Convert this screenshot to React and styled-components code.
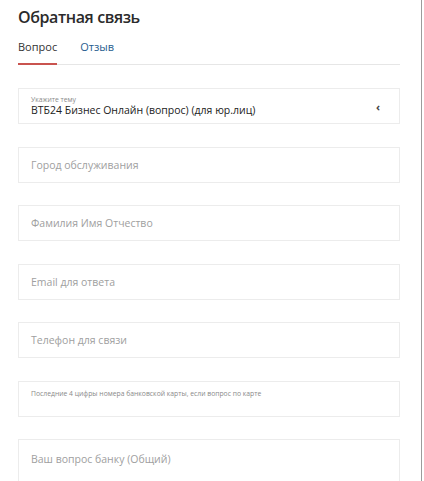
import React from "react";
import styled, { createGlobalStyle } from "styled-components";

const Global = createGlobalStyle`
  html, body { margin: 0; padding: 0; background: #fff; }
  body { font-family: "Open Sans", "Noto Sans", sans-serif; overflow: hidden; }
  * { box-sizing: border-box; }
`;

const Page = styled.div`
  width: 422px;
  height: 481px;
  border-right: 1px solid #9c9c9c;
  padding: 6px 0 0 18px;
  overflow: hidden;
`;

const Content = styled.div`
  width: 382px;
  display: flex;
  flex-direction: column;
`;

const Title = styled.h1`
  margin: 0;
  font-size: 16px;
  font-weight: 600;
  letter-spacing: -0.4px;
  color: #2b2b2b;
  line-height: 22px;
`;

const Tabs = styled.div`
  display: flex;
  gap: 23px;
  margin-top: 11px;
  border-bottom: 1px solid #e6e6e6;
`;

const Tab = styled.div`
  font-size: 11px;
  line-height: 15px;
  padding-bottom: 9px;
  color: ${(p) => (p.$active ? "#333" : "#1f5d8e")};
  border-bottom: 2px solid ${(p) => (p.$active ? "#c9534f" : "transparent")};
  margin-bottom: -1px;
`;

const Form = styled.div`
  display: flex;
  flex-direction: column;
  gap: 22.5px;
  margin-top: 23px;
`;

const Field = styled.div`
  height: ${(p) => p.$h || 36}px;
  border: 1px solid #ececec;
  background: #fff;
  padding: 0 12px;
  display: flex;
  flex-direction: column;
  justify-content: ${(p) => (p.$top ? "flex-start" : "center")};
  padding-top: ${(p) => (p.$top ? p.$top : 0)}px;
  position: relative;
  flex-shrink: 0;
`;

const Placeholder = styled.div`
  font-size: 10.5px;
  color: #a0a0a0;
  line-height: 14px;
`;

const Tiny = styled.div`
  font-size: 6.8px;
  line-height: 8px;
  color: #8a8a8a;
`;

const Value = styled.div`
  font-size: 10.5px;
  line-height: 13px;
  color: #222;
`;

const Chevron = styled.span`
  position: absolute;
  right: 19px;
  top: 10px;
  font-size: 11px;
  color: #444;
  font-weight: 700;
`;

export default function App() {
  return (
    <>
      <Global />
      <Page>
        <Content>
          <Title>Обратная связь</Title>
          <Tabs>
            <Tab $active>Вопрос</Tab>
            <Tab>Отзыв</Tab>
          </Tabs>
          <Form>
            <Field $top={7}>
              <Tiny>Укажите тему</Tiny>
              <Value>ВТБ24 Бизнес Онлайн (вопрос) (для юр.лиц)</Value>
              <Chevron>‹</Chevron>
            </Field>
            <Field>
              <Placeholder>Город обслуживания</Placeholder>
            </Field>
            <Field>
              <Placeholder>Фамилия Имя Отчество</Placeholder>
            </Field>
            <Field>
              <Placeholder>Email для ответа</Placeholder>
            </Field>
            <Field>
              <Placeholder>Телефон для связи</Placeholder>
            </Field>
            <Field $top={8}>
              <Tiny>Последние 4 цифры номера банковской карты, если вопрос по карте</Tiny>
            </Field>
            <Field $top={12} $h={70}>
              <Placeholder>Ваш вопрос банку (Общий)</Placeholder>
            </Field>
          </Form>
        </Content>
      </Page>
    </>
  );
}
